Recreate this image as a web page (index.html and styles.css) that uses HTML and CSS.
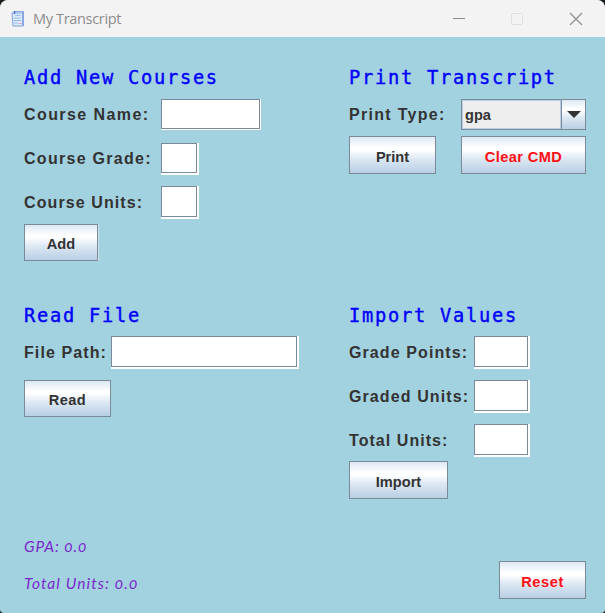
FILE: index.html
```html
<!DOCTYPE html>
<html lang="en">
<head>
<meta charset="utf-8">
<title>My Transcript</title>
<link rel="stylesheet" href="styles.css">
</head>
<body>
<div class="window">
  <header class="titlebar">
    <svg class="app-icon" width="14" height="18" viewBox="0 0 14 18">
      <path d="M1 3h10.5v13H2z" fill="#dceafb" stroke="#7d9fe0"/>
      <path d="M2.5 1.5h10v14.3l-1 .2V1.5" fill="none" stroke="#86a6e6"/>
      <path d="M3.5 1v3" stroke="#4c6fc4" stroke-width="1.4"/>
      <path d="M4.5 5.5h5M3 8h7M3 10.5h7M3 13h4" stroke="#96bdf2"/>
      <path d="M7.5 13.5h3" stroke="#dba5c8"/>
    </svg>
    <span class="app-title">My Transcript</span>
    <svg class="controls" width="130" height="14" viewBox="0 0 130 14" fill="none">
      <path d="M0 6.5h12" stroke="#8c8c8c"/>
      <rect x="58.5" y="1.5" width="11" height="11" rx="1" stroke="#dfdfdf"/>
      <path d="M117 1l12 12M129 1l-12 12" stroke="#8c8c8c" stroke-width="1.1"/>
    </svg>
  </header>
  <main class="panel">
    <section class="add">
      <h2>Add New Courses</h2>
      <div class="row"><label class="w137 s-name">Course Name:</label><span class="field f98"></span></div>
      <div class="row"><label class="w137 s-grade">Course Grade:</label><span class="field f36"></span></div>
      <div class="row"><label class="w137 s-units">Course Units:</label><span class="field f36 raised"></span></div>
      <button class="b-add">Add</button>
    </section>
    <section class="print">
      <h2>Print Transcript</h2>
      <div class="row combo-row"><label class="w112 s-type">Print Type:</label><div class="combo"><span class="value">gpa</span><span class="arrow"><svg width="14" height="7" viewBox="0 0 14 7"><path d="M0 0h14L7 7z" fill="#333"/></svg></span></div></div>
      <div class="buttons"><button class="b-print">Print</button><button class="b-clear red">Clear CMD</button></div>
    </section>
    <section class="read">
      <h2>Read File</h2>
      <div class="row"><label class="w87 s-path">File Path:</label><span class="field f186 raised"></span></div>
      <button class="b-read">Read</button>
    </section>
    <section class="import">
      <h2>Import Values</h2>
      <div class="row"><label class="w125 s-points">Grade Points:</label><span class="field f54 raised"></span></div>
      <div class="row"><label class="w125 s-points">Graded Units:</label><span class="field f54 raised"></span></div>
      <div class="row"><label class="w125 s-total">Total Units:</label><span class="field f54 raised"></span></div>
      <button class="b-import">Import</button>
    </section>
    <section class="totals">
      <p class="gpa">GPA: 0.0</p>
      <p class="sum">Total Units: 0.0</p>
    </section>
    <section class="reset"><button class="b-reset red">Reset</button></section>
  </main>
</div>
</body>
</html>
```

FILE: styles.css
```css
* { box-sizing: border-box; }
html { background: #1c1c1c; }
body { margin: 0; }
.window {
  width: 605px;
  height: 613px;
  overflow: hidden;
  background: #a2d1df;
  border-radius: 8px 8px 4px 4px;
}
.titlebar {
  display: flex;
  align-items: center;
  height: 37px;
  padding: 0 22px 0 11px;
  background: #f3f3f3;
}
.app-icon { margin-right: 8px; }
.app-title {
  font: 14.5px/20px "Open Sans", sans-serif;
  letter-spacing: -0.33px;
  color: #8c8c8c;
}
.controls { margin-left: auto; }
.panel {
  display: grid;
  grid-template-columns: 325px 237px;
  grid-template-rows: 238px 223px 70px;
  padding: 25px 0 0 24px;
}
h2 {
  margin: 0 0 7px;
  height: 30px;
  font: 400 18.7px/32px "DejaVu Sans Mono", monospace;
  letter-spacing: 1.74px;
  color: #0000fb;
  -webkit-text-stroke: 0.4px #0000fb;
  white-space: nowrap;
}
.row { display: flex; height: 32px; margin-bottom: 12px; }
label {
  font: 700 16px/31px "Liberation Sans", Arial, sans-serif;
  letter-spacing: 1.1px;
  color: #333;
  white-space: nowrap;
}
.s-name { letter-spacing: 1.42px; }
.s-grade { letter-spacing: 1.28px; }
.s-type { letter-spacing: 1.3px; }
.s-total { letter-spacing: 1.05px; }
.w137 { width: 137px; }
.w112 { width: 112px; }
.w87 { width: 87px; }
.w125 { width: 125px; }
.field {
  height: 30px;
  background: #fff;
  border: 1px solid #7a8a99;
  box-shadow: 1px 0 #fff, 0 1px #fff, 2px 0 #fff, 0 2px #fff, 2px 2px #fff;
}
.raised { margin-top: -1px; height: 31px; }
.f98 { width: 99px; box-shadow: 1px 0 #fff, 0 1px #fff, 1px 1px #fff; }
.f36 { width: 36px; }
.f186 { width: 186px; }
.f54 { width: 54px; }
button {
  display: block;
  height: 38px;
  padding: 3px 0 0;
  border: 1px solid #7a8a99;
  border-radius: 0;
  background: linear-gradient(#dde8f3 0%, #fff 30%, #fff 36%, #dde8f3 60%, #b8cfe5 100%);
  font: 700 14.6px/20px "Liberation Sans", Arial, sans-serif;
  color: #333;
}
.red { color: #ff0f14; }
.buttons { display: flex; gap: 25px; }
.combo-row { margin-bottom: 5px; }
.combo {
  display: flex;
  width: 125px;
  height: 31px;
  border: 1px solid #7a8a99;
}
.value {
  width: 99px;
  padding-left: 2px;
  border: 1px solid #b8cfe5;
  background: #eee;
  font: 700 14.6px/28px "Liberation Sans", Arial, sans-serif;
  color: #333;
}
.arrow {
  display: flex;
  flex: 1;
  align-items: center;
  justify-content: center;
  border-left: 1px solid #7a8a99;
  background: linear-gradient(#dde8f3 0%, #fff 30%, #fff 36%, #dde8f3 60%, #b8cfe5 100%);
}
.b-add {
  width: 74px;
  height: 37px;
  margin-top: -7px;
  box-shadow: 1px 0 #cfe2ec;
}
.b-print { width: 87px; }
.b-clear { width: 125px; letter-spacing: 0.4px; }
.b-read { width: 87px; height: 37px; margin-top: -1px; letter-spacing: 0.4px; }
.b-import { width: 99px; margin-top: -8px; }
.b-reset { width: 87px; letter-spacing: 0.6px; }
.reset { padding: 38px 0 0 150px; }
.totals { padding-top: 9px; }
.totals p {
  margin: 0;
  height: 37px;
  font: italic 400 15.5px/28px Lato, sans-serif;
  font-variant-numeric: oldstyle-nums;
  letter-spacing: 1.1px;
  color: #7a2acb;
}
.totals .gpa { letter-spacing: 0.9px; }
```
